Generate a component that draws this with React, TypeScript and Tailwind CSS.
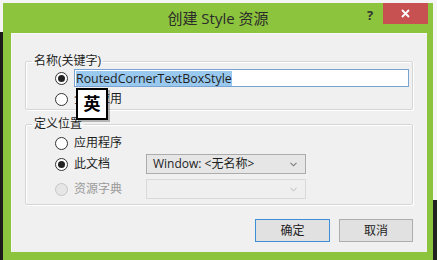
import { ReactNode } from "react";

const cjk = "font-['Open_Sans','Noto_Sans_CJK_SC',sans-serif]";

function Radio({ checked, disabled }: { checked?: boolean; disabled?: boolean }) {
  return (
    <span
      className={
        "flex h-[13px] w-[13px] shrink-0 items-center justify-center rounded-full border " +
        (disabled ? "border-[#c6c6c6] bg-[#e6e6e6]" : "border-[#333] bg-white")
      }
    >
      {checked ? <span className="h-[7px] w-[7px] rounded-full bg-[#222]" /> : null}
    </span>
  );
}

function Group({ title, className, children }: { title: string; className?: string; children: ReactNode }) {
  return (
    <fieldset
      className={
        "rounded-[2px] border border-[#d5d5d5] shadow-[1px_1px_0_#fff,inset_1px_1px_0_#fff] " + (className ?? "")
      }
    >
      <legend className="ml-[6px] px-[2px] text-[12px] leading-[16px] text-[#1e1e1e]">{title}</legend>
      {children}
    </fieldset>
  );
}

function Combo({ text, disabled }: { text?: string; disabled?: boolean }) {
  return (
    <div
      className={
        "flex h-[20px] w-[160px] items-center justify-between border pl-[6px] pr-[8px] " +
        (disabled ? "border-[#d9d9d9] bg-[#efefef]" : "border-[#acacac] bg-[#e6e6e6]")
      }
    >
      <span className="text-[12px] text-[#1e1e1e]">{text}</span>
      <svg width="7" height="5" viewBox="0 0 7 5" className={disabled ? "text-[#c8c8c8]" : "text-[#7a7a7a]"}>
        <path d="M0.5 0.8 L3.5 3.8 L6.5 0.8" fill="none" stroke="currentColor" strokeWidth="1.1" />
      </svg>
    </div>
  );
}

export default function App() {
  return (
    <div
      className={
        "relative h-[260px] w-[437px] overflow-hidden bg-[linear-gradient(to_bottom,#f4f4f4_0,#f4f4f4_200px,#222_200px)] pl-[3px] pt-[3px] " +
        cjk
      }
    >
      <div className="absolute left-0 top-[32px] h-[228px] w-[3px] bg-[#1b1b1b]" />
      <div className="flex h-[262px] w-[430px] flex-col bg-[#8cc43d]">
        <div className="relative flex h-[30px] items-center justify-center">
          <span className="text-[15px] text-[#2b2b2b]">创建 Style 资源</span>
          <span className="absolute left-[364px] top-[3px] text-[13px] font-bold text-[#333]">?</span>
          <div className="absolute left-[380px] top-0 flex h-[21px] w-[45px] items-center justify-center bg-[#c75050]">
            <svg width="9" height="9" viewBox="0 0 9 9">
              <path d="M1 1 L8 8 M8 1 L1 8" stroke="#fff" strokeWidth="1.8" />
            </svg>
          </div>
        </div>
        <div className="ml-[8px] mr-[6px] flex h-[219px] flex-col border-l border-t border-[#f7f7f7] bg-[#f0f0f0] pl-[13px] pr-[14px] pt-[19px]">
          <Group title="名称(关键字)" className="h-[57px]">
            <div className="flex flex-col gap-[3px] pl-[29px]">
              <div className="flex h-[18px] items-center gap-[6px]">
                <Radio checked />
                <div className="flex h-[18px] w-[335px] items-center border border-[#7ba3d0] bg-white pl-[1px]">
                  <span className="bg-[#99c9ef] text-[12.4px] leading-[15px] text-[#1e1e1e]">RoutedCornerTextBoxStyle</span>
                </div>
              </div>
              <div className="flex h-[18px] items-center gap-[6px]">
                <Radio />
                <span className="text-[12px] text-[#1e1e1e]">全局应用</span>
              </div>
            </div>
          </Group>
          <Group title="定义位置" className="mt-[6px] h-[89px]">
            <div className="flex flex-col pl-[29px] pt-[2px]">
              <div className="flex h-[18px] items-center gap-[6px]">
                <Radio />
                <span className="text-[12px] text-[#1e1e1e]">应用程序</span>
              </div>
              <div className="mt-[2px] flex h-[20px] items-center">
                <div className="flex w-[91px] items-center gap-[6px]">
                  <Radio checked />
                  <span className="text-[12px] text-[#1e1e1e]">此文档</span>
                </div>
                <Combo text="Window: <无名称>" />
              </div>
              <div className="mt-[5px] flex h-[20px] items-center">
                <div className="flex w-[91px] items-center gap-[6px]">
                  <Radio disabled />
                  <span className="text-[12px] text-[#9a9a9a]">资源字典</span>
                </div>
                <Combo disabled />
              </div>
            </div>
          </Group>
          <div className="mt-[14px] flex justify-end gap-[9px]">
            <button className="h-[23px] w-[75px] border border-[#3c8fd6] bg-[#e1e1e1] text-[12px] text-[#1e1e1e]">
              确定
            </button>
            <button className="h-[23px] w-[74px] border border-[#adadad] bg-[#e1e1e1] text-[12px] text-[#1e1e1e]">
              取消
            </button>
          </div>
        </div>
      </div>
      <div className="absolute left-[76px] top-[88px] flex h-[32px] w-[32px] items-center justify-center border-2 border-black bg-white shadow-[2px_2px_0_rgba(0,0,0,0.25)]">
        <span className="text-[17px] font-bold text-black">英</span>
      </div>
    </div>
  );
}
